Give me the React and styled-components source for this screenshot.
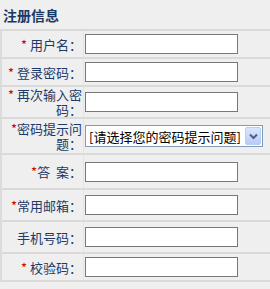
import React from "react";
import styled, { createGlobalStyle } from "styled-components";

const Global = createGlobalStyle`
  html, body { margin: 0; padding: 0; background: #efefef; }
  body { font-family: "Noto Sans CJK SC", sans-serif; }
`;

const Panel = styled.div`
  width: 270px;
  height: 289px;
  background: #efefef;
  overflow: hidden;
`;

const Title = styled.div`
  height: 31px;
  padding-left: 3px;
  box-sizing: border-box;
  display: flex;
  align-items: center;
  font: bold 14px "Noto Sans CJK SC", sans-serif;
  color: #1a3866;
  border-bottom: 2px solid #d9d9d9;
`;

const Row = styled.div`
  display: grid;
  grid-template-columns: 81px 1fr;
  column-gap: 1px;
  height: ${(p) => p.$h}px;
  box-sizing: border-box;
  border-bottom: 2px solid #dadada;
  border-left: 2px solid #dcdcdc;
  background: #e4e4e4;
`;

const Label = styled.div`
  display: flex;
  align-items: center;
  justify-content: flex-end;
  text-align: right;
  padding-right: 1px;
  background: #efefef;
  font: 13px/15px "Noto Sans CJK SC", sans-serif;
  color: #1d3a68;
  white-space: nowrap;
`;

const Star = styled.span`
  color: #cc0000;
`;

const Value = styled.div`
  display: flex;
  align-items: center;
  padding-left: 1px;
  background: #efefef;
`;

const Input = styled.input`
  width: 153px;
  height: 20px;
  box-sizing: border-box;
  border: 1px solid #777;
  background: #fff;
  margin: 0;
  padding: 0 2px;
`;

const Select = styled.div`
  width: 178px;
  height: 22px;
  box-sizing: border-box;
  border: 1px solid #7f9db9;
  background: #fff;
  display: flex;
  align-items: center;
  justify-content: space-between;
  padding: 1px 1px 1px 3px;
  font: 13px "Noto Sans CJK SC", sans-serif;
  color: #000;
  white-space: nowrap;
`;

const DropButton = styled.span`
  width: 16px;
  height: 18px;
  box-sizing: border-box;
  border: 1px solid #b9cdf5;
  border-radius: 2px;
  background: linear-gradient(#dbe6fd, #b7cbf7);
  display: flex;
  align-items: center;
  justify-content: center;
`;

const rows = [
  { label: <><Star>*</Star> 用户名：</>, h: 28 },
  { label: <><Star>*</Star> 登录密码：</>, h: 28 },
  { label: <><Star>*</Star> 再次输入密<br />码：</>, h: 32 },
  { label: <><Star>*</Star>密码提示问<br />题：</>, h: 36, select: true },
  { label: <><Star>*</Star>答&nbsp;&nbsp;案：</>, h: 35 },
  { label: <><Star>*</Star>常用邮箱：</>, h: 32 },
  { label: <>手机号码：</>, h: 32 },
  { label: <><Star>*</Star> 校验码：</>, h: 28 },
];

export default function App() {
  return (
    <Panel>
      <Global />
      <Title>注册信息</Title>
      {rows.map((r, i) => (
        <Row key={i} $h={r.h}>
          <Label><span>{r.label}</span></Label>
          <Value>
            {r.select ? (
              <Select>
                <span>[请选择您的密码提示问题]</span>
                <DropButton>
                  <svg width="9" height="7" viewBox="0 0 9 7">
                    <path d="M1 1.5 L4.5 5 L8 1.5" fill="none" stroke="#4d6185" strokeWidth="2" />
                  </svg>
                </DropButton>
              </Select>
            ) : (
              <Input type="text" />
            )}
          </Value>
        </Row>
      ))}
    </Panel>
  );
}
